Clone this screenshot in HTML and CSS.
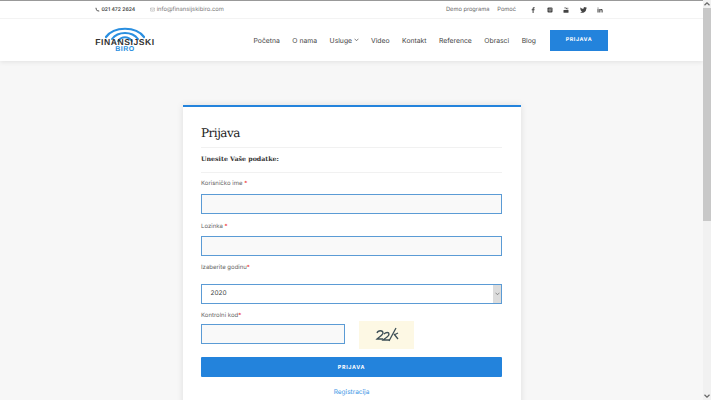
FILE: index.html
```html
<!DOCTYPE html>
<html lang="sr">
<head>
<meta charset="utf-8">
<title>Prijava</title>
<link rel="stylesheet" href="styles.css">
</head>
<body>
<div class="window">
  <div class="page">
    <header class="site-header">
      <div class="topbar">
        <div class="container topbar-in">
          <div class="contacts">
            <span class="phone"><svg class="ic" viewBox="0 0 10 10"><path d="M2 1 L3.6 3 L3 4 C3.5 5.3 4.7 6.5 6 7 L7 6.4 L9 8 L8 9 C4.5 9.2 .8 5.5 1 2 Z" fill="#555"/></svg>021 472 2624</span>
            <span class="mail"><svg class="ic" viewBox="0 0 10 10"><rect x=".7" y="2" width="8.6" height="6.2" rx="1" fill="none" stroke="#888" stroke-width=".8"/><path d="M1 3 L5 5.8 L9 3" fill="none" stroke="#888" stroke-width=".8"/></svg>info@finansijskibiro.com</span>
          </div>
          <div class="toplinks">
            <a>Demo programa</a>
            <a>Pomoć</a>
            <div class="socials">
              <svg class="soc" viewBox="0 0 10 10"><path d="M6 10V5.6H7.5L7.7 3.9H6V2.9C6 2.4 6.2 2.1 6.9 2.1H7.8V.5C7.4.5 7 .4 6.5.4 5.2.4 4.3 1.2 4.3 2.7V3.9H2.8V5.6H4.3V10Z" fill="#444"/></svg>
              <svg class="soc" viewBox="0 0 10 10"><rect x=".8" y=".8" width="8.4" height="8.4" rx="1.8" fill="#444"/><circle cx="5" cy="5" r="1.9" fill="none" stroke="#ddd" stroke-width=".9"/><circle cx="7.5" cy="2.5" r=".6" fill="#ddd"/></svg>
              <svg class="soc" viewBox="0 0 10 10"><rect x=".8" y="5" width="8.4" height="4.6" rx="1" fill="#444"/><path d="M2.6.3 L3.6 2 V3.8 M4.6.3 L3.6 2" stroke="#444" stroke-width=".8" fill="none"/><rect x="5" y="1.2" width="1.4" height="2.6" rx=".6" fill="#444"/><path d="M7.1 1.2V3.4C7.1 3.9 7.8 3.9 8.3 3.3M8.3 1.2V3.9" stroke="#444" stroke-width=".7" fill="none"/></svg>
              <svg class="soc tw" viewBox="0 0 12 10"><path d="M12 1.2a4.9 4.9 0 0 1-1.4.4A2.5 2.5 0 0 0 11.700.2a5 5 0 0 1-1.600.6 2.500 2.500 0 0 0-4.200 2.300A7 7 0 0 1 .8.500a2.500 2.500 0 0 0 .8 3.300 2.500 2.500 0 0 1-1.100-.3 2.500 2.500 0 0 0 2 2.500 2.500 2.500 0 0 1-1.100 0 2.500 2.500 0 0 0 2.300 1.700A5 5 0 0 1 0 8.700 7 7 0 0 0 10.800 2.500 5 5 0 0 0 12 1.200Z" fill="#444"/></svg>
              <svg class="soc" viewBox="0 0 10 10"><rect x=".8" y="3.400" width="1.800" height="5.800" fill="#444"/><circle cx="1.700" cy="1.700" r="1" fill="#444"/><path d="M3.800 3.400H5.500V4.200C6 3.500 6.600 3.200 7.400 3.200 8.800 3.200 9.400 4.100 9.400 5.700V9.200H7.600V6C7.600 5.200 7.300 4.800 6.700 4.800 6 4.800 5.600 5.300 5.600 6.100V9.200H3.800Z" fill="#444"/></svg>
            </div>
          </div>
        </div>
      </div>
      <div class="mainbar">
        <div class="container mainbar-in">
          <div class="logo">
            <svg class="logo-arcs" viewBox="0 0 42 16"><g fill="none" stroke="#2a8fe0" stroke-linecap="round"><path d="M2 10 C10 -1 32 -1 40 10" stroke-width="2.200"/><path d="M8 12 C14 4 28 4 34 12" stroke-width="2"/><path d="M14 14 C18 9 24 9 28 14" stroke-width="1.800"/></g></svg>
            <span class="logo-name">FINANSIJSKI</span>
            <span class="logo-sub">BIRO</span>
          </div>
          <nav class="nav">
            <a>Početna</a>
            <a>O nama</a>
            <a class="has-caret">Usluge<svg class="caret" viewBox="0 0 6 4"><path d="M.7.8 3 3.200 5.300.8" fill="none" stroke="#444" stroke-width=".8"/></svg></a>
            <a>Video</a>
            <a>Kontakt</a>
            <a>Reference</a>
            <a>Obrasci</a>
            <a>Blog</a>
            <span class="cta">PRIJAVA</span>
          </nav>
        </div>
      </div>
    </header>
    <main class="content">
      <section class="card">
        <h1 class="title">Prijava</h1>
        <h2 class="subtitle">Unesite Vaše podatke:</h2>
        <form class="form">
          <div class="field f-user">
            <span class="label">Korisničko ime <i>*</i></span>
            <div class="input"></div>
          </div>
          <div class="field f-pass">
            <span class="label">Lozinka <i>*</i></span>
            <div class="input"></div>
          </div>
          <div class="field f-year">
            <span class="label">Izaberite godinu<i>*</i></span>
            <div class="select"><span class="select-val">2020</span><span class="select-btn"><svg class="caret" viewBox="0 0 6 4"><path d="M.7.8 3 3.200 5.300.8" fill="none" stroke="#666" stroke-width=".8"/></svg></span></div>
          </div>
          <div class="field f-code">
            <span class="label">Kontrolni kod<i>*</i></span>
            <div class="captcha-row">
              <div class="input short"></div>
              <div class="captcha"><svg viewBox="0 0 55 28"><g fill="none" stroke="#3f5057" stroke-width="1.300"><path d="M18 12c1-3 6-3 6 0 0 2-4 4-6 6h6"/><path d="M25 13c2-2 5-2 5 0 0 3-4 4-6 6h7"/><path d="M37 7 30 20M35 14l4-2M35 13l4 5"/></g></svg></div>
            </div>
          </div>
          <button class="submit" type="button">PRIJAVA</button>
          <a class="reg">Registracija</a>
        </form>
      </section>
    </main>
  </div>
  <div class="scrollbar">
    <svg class="sb-arrow" viewBox="0 0 8 8"><path d="M1.500 5.200 4 2.800 6.500 5.200" fill="none" stroke="#666" stroke-width="1.200"/></svg>
    <div class="sb-thumb"></div>
    <svg class="sb-arrow end" viewBox="0 0 8 8"><path d="M1.500 2.800 4 5.200 6.500 2.800" fill="none" stroke="#666" stroke-width="1.200"/></svg>
  </div>
</div>
</body>
</html>
```
FILE: styles.css
```css
* { box-sizing: border-box; }
html, body { margin: 0; padding: 0; height: 400px; overflow: hidden; }
body { font-family: "Inter", "Liberation Sans", sans-serif; color: #444; background: #f7f7f7; text-rendering: geometricPrecision; }
a { color: inherit; text-decoration: none; }
.window { display: flex; width: 711px; height: 400px; overflow: hidden; }
.page { flex: 1; min-width: 0; height: 400px; overflow: hidden; background: #f7f7f7; }
.scrollbar { width: 8px; height: 400px; background: #f1f1f1; display: flex; flex-direction: column; }
.sb-arrow { width: 8px; height: 8px; display: block; flex: none; }
.sb-thumb { width: 8px; height: 213px; background: #c8c8c8; }
.sb-arrow.end { margin-top: auto; }

.container { width: 513px; margin-left: 95px; }
.site-header { background: #fff; border-top: 1px solid #999; box-shadow: 0 1px 5px rgba(0,0,0,.09); }
.topbar { height: 18px; border-bottom: 1px solid #f3f3f3; }
.topbar-in { height: 100%; display: flex; align-items: center; justify-content: space-between; font-size: 5.300px; }
.contacts { display: flex; gap: 14.500px; }
.phone { font-weight: 600; font-size: 5.100px; color: #444; display: flex; align-items: center; gap: 1.500px; }
.mail { color: #777; display: flex; align-items: center; gap: 2px; font-size: 5.800px; }
.ic { width: 5px; height: 5px; }
.toplinks { display: flex; align-items: center; gap: 8px; color: #666; font-size: 5.700px; padding-right: 5px; }
.socials { display: flex; align-items: center; gap: 10.500px; margin-left: 6px; }
.soc { width: 6px; height: 6px; display: block; }
.soc.tw { width: 7px; }

.mainbar { height: 42px; }
.mainbar-in { height: 100%; display: flex; align-items: center; justify-content: space-between; }
.logo { width: 60px; display: flex; flex-direction: column; align-items: center; position: relative; padding-top: 11px; font-family: "Liberation Sans", sans-serif; }
.logo-arcs { width: 42px; height: 16px; position: absolute; top: 0; left: 9px; }
.logo-name { position: relative; font-size: 8.600px; line-height: 8px; font-weight: 700; color: #333; letter-spacing: .55px; white-space: nowrap; }
.logo-sub { font-size: 7px; line-height: 7px; font-weight: 700; color: #2a8fe0; letter-spacing: .5px; }
.nav { display: flex; align-items: center; gap: 12.500px; font-size: 6.800px; color: #444; }
.has-caret { display: flex; align-items: center; gap: 1.500px; }
.caret { width: 5px; height: 3.500px; display: block; }
.cta { width: 58px; height: 21px; margin-left: 1.500px; background: #2383dc; color: #fff; font-size: 5.300px; font-weight: 700; letter-spacing: .6px; display: flex; align-items: center; justify-content: center; }

.content { padding-top: 44px; display: flex; }
.card { width: 338px; margin-left: 182.500px; height: 320px; background: #fff; border-top: 2.500px solid #2383dc; box-shadow: 0 0 7px rgba(0,0,0,.1); padding: 0 18.500px; }
.title { margin: 0; height: 40.500px; padding-top: 17px; font-family: "DejaVu Serif", serif; font-size: 12px; letter-spacing: -.5px; line-height: 18px; font-weight: 400; color: #222; border-bottom: 1px solid #f1f1f1; }
.subtitle { margin: 0; height: 25px; font-family: "DejaVu Serif", serif; font-size: 6.300px; font-weight: 700; line-height: 24px; color: #333; border-bottom: 1px solid #f1f1f1; }
.form { display: flex; flex-direction: column; }
.label { display: block; font-size: 6px; line-height: 8px; color: #666; }
.label i { color: #e33; font-style: normal; }
.field { display: flex; flex-direction: column; }
.f-user { padding-top: 7.500px; gap: 6px; }
.f-pass { padding-top: 9px; gap: 5px; }
.f-year { padding-top: 8px; gap: 12px; }
.f-code { padding-top: 8.500px; gap: 3.500px; }
.input { height: 20px; background: #f9f9f9; border: 1.500px solid #5b9bd5; }
.input.short { width: 144px; height: 20.500px; margin-top: 0; }
.select { height: 19.500px; border: 1.500px solid #5b9bd5; background: #fff; display: flex; align-items: stretch; justify-content: space-between; font-size: 6.500px; color: #444; }
.select-val { padding-left: 8.500px; line-height: 17px; }
.select-btn { width: 8px; background: #dcdcdc; display: flex; align-items: center; justify-content: center; }
.captcha-row { display: flex; align-items: flex-start; gap: 14px; }
.captcha { width: 55px; height: 28px; background: #fdf8e4; margin-top: -3px; }
.captcha svg { display: block; width: 55px; height: 28px; }
.submit { margin-top: 8px; height: 20.500px; border: 0; padding: 0; background: #2383dc; color: #fff; font-family: inherit; font-size: 5.300px; font-weight: 700; letter-spacing: .7px; border-radius: 1px; }
.reg { margin-top: 11px; text-align: center; font-size: 6.500px; color: #3d97e6; }
```
